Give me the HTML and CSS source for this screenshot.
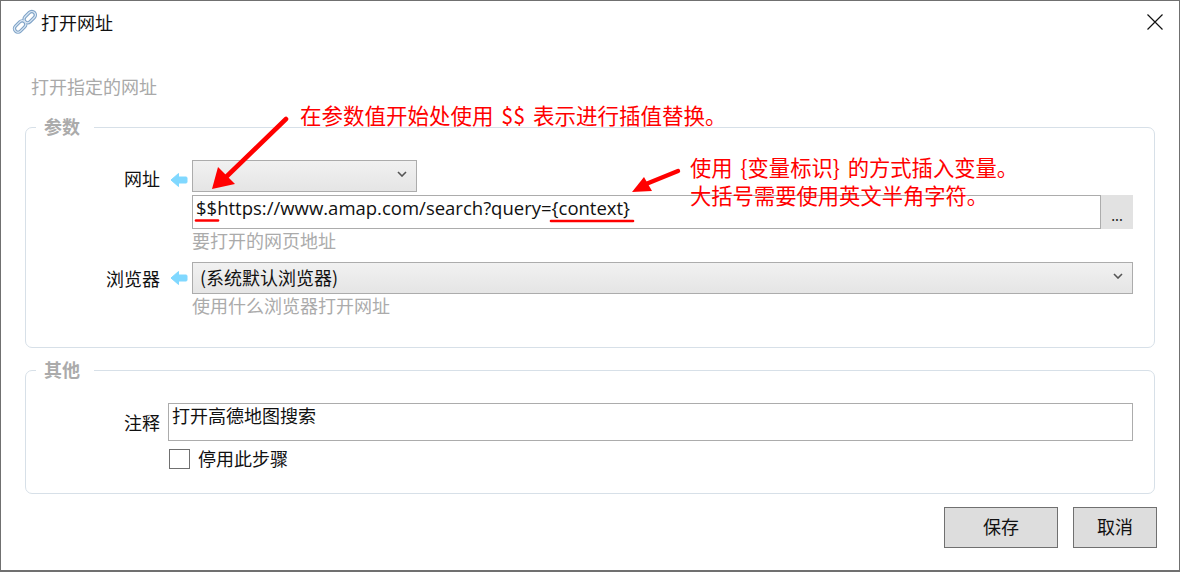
FILE: index.html
```html
<!DOCTYPE html>
<html lang="zh-CN">
<head>
<meta charset="utf-8">
<title>打开网址</title>
<link rel="stylesheet" href="styles.css">
</head>
<body>
<div class="window">
  <header class="titlebar">
    <svg class="app-icon" viewBox="0 0 26 26" width="26" height="26">
      <g fill="none" stroke="#7fa3c7" stroke-width="3.4">
        <rect x="14.2" y="1.6" width="7" height="13" rx="3.5" transform="rotate(45 17.7 8.1)"/>
        <rect x="4.6" y="11" width="7" height="13" rx="3.5" transform="rotate(45 8.1 17.5)"/>
      </g>
      <g fill="none" stroke="#dce8f4" stroke-width="1.2">
        <rect x="14.2" y="1.6" width="7" height="13" rx="3.5" transform="rotate(45 17.7 8.1)"/>
        <rect x="4.6" y="11" width="7" height="13" rx="3.5" transform="rotate(45 8.1 17.5)"/>
      </g>
    </svg>
    <span class="title">打开网址</span>
    <svg class="close" viewBox="0 0 16 16" width="16" height="16"><path d="M.5.5l15 15M15.5.5l-15 15" stroke="#111" stroke-width="1.2" fill="none"/></svg>
  </header>

  <main class="content">
    <p class="subtitle">打开指定的网址</p>

    <fieldset class="group group-params">
      <legend>参数</legend>
      <div class="row row-url">
        <span class="label">网址</span>
        <svg class="link-arrow" viewBox="0 0 18 16" width="18" height="16"><path d="M1 8L8.5 1.5V5H16a1 1 0 0 1 1 1v4a1 1 0 0 1-1 1H8.5v3.5z" fill="#80d8ff" stroke="#80d8ff" stroke-linejoin="round"/></svg>
        <div class="stack">
          <div class="select select-short">
            <svg class="chevron" viewBox="0 0 10 6" width="10" height="6"><path d="M1 1l4 4 4-4" stroke="#555" stroke-width="1.6" fill="none"/></svg>
          </div>
          <div class="input-group">
            <div class="input">$$https://www.amap.com/search?query={context}</div>
            <div class="more">...</div>
          </div>
          <div class="hint">要打开的网页地址</div>
        </div>
      </div>
      <div class="row row-browser">
        <span class="label">浏览器</span>
        <svg class="link-arrow" viewBox="0 0 18 16" width="18" height="16"><path d="M1 8L8.5 1.5V5H16a1 1 0 0 1 1 1v4a1 1 0 0 1-1 1H8.5v3.5z" fill="#80d8ff" stroke="#80d8ff" stroke-linejoin="round"/></svg>
        <div class="stack">
          <div class="select"><span>(系统默认浏览器)</span>
            <svg class="chevron" viewBox="0 0 10 6" width="10" height="6"><path d="M1 1l4 4 4-4" stroke="#555" stroke-width="1.6" fill="none"/></svg>
          </div>
          <div class="hint">使用什么浏览器打开网址</div>
        </div>
      </div>
    </fieldset>

    <fieldset class="group group-other">
      <legend>其他</legend>
      <div class="row row-note">
        <span class="label">注释</span>
        <div class="stack">
          <div class="textarea">打开高德地图搜索</div>
          <div class="check"><span class="box"></span><span class="check-text">停用此步骤</span></div>
        </div>
      </div>
    </fieldset>

    <footer class="actions">
      <div class="btn btn-save">保存</div>
      <div class="btn btn-cancel">取消</div>
    </footer>
  </main>

  <svg class="marks" width="1180" height="572" viewBox="0 0 1180 572">
    <g fill="#f00">
      <path d="M212 189L218 167L235 184Z"/>
      <path d="M632 192L644 177L652 191Z"/>
    </g>
    <g stroke="#f00" fill="none" stroke-linecap="round">
      <path d="M224 179L286 119" stroke-width="4.600"/>
      <path d="M646 184L678 171" stroke-width="4.400"/>
      <path d="M196 220.500H218" stroke-width="2.600"/>
      <path d="M551 221H633" stroke-width="2.600"/>
    </g>
  </svg>
  <div class="note note-one">在参数值开始处使用 $$ 表示进行插值替换。</div>
  <div class="note note-two">使用 {变量标识} 的方式插入变量。<br>大括号需要使用英文半角字符。</div>
</div>
</body>
</html>
```
FILE: styles.css
```css
* { box-sizing: border-box; }
html, body { margin: 0; padding: 0; }
body {
  width: 1180px;
  height: 572px;
  overflow: hidden;
  background: #fff;
  font-family: "Noto Sans", "Noto Sans CJK SC", sans-serif;
  font-size: 18px;
  color: #111;
}
.window {
  position: relative;
  width: 1180px;
  height: 572px;
  border: 1px solid #707070;
  border-bottom-width: 2px;
  background: #fff;
  overflow: hidden;
}
.titlebar {
  display: flex;
  align-items: center;
  height: 42px;
  padding-left: 11px;
  padding-right: 16px;
}
.app-icon { flex: none; margin-right: 3px; }
.title { flex: 1; font-size: 18px; line-height: 24px; font-family: "Noto Sans CJK SC", sans-serif; }
.close { flex: none; }

.content { padding: 0 22px 0 24px; }
.subtitle {
  margin: 30px 0 0 6px;
  height: 26px;
  line-height: 26px;
  color: #a9a9a9;
  font-family: "Noto Sans CJK SC", sans-serif;
}
.group {
  display: block;
  margin: 0;
  padding: 0;
  width: 1130px;
  border: 1.5px solid #d7e0e8;
  border-radius: 7px;
  font-family: "Noto Sans CJK SC", sans-serif;
}
.group legend {
  margin-left: 10px;
  padding: 0 14px 0 8px;
  height: 24px;
  line-height: 22px;
  font-weight: 700;
  color: #ababab;
}
.group-params { height: 233px; margin-top: 16px; }
.group-other { height: 136px; margin-top: 10px; }

.row { display: flex; align-items: flex-start; }
.label { width: 134px; flex: none; text-align: right; line-height: 24px; }
.link-arrow { flex: none; margin: 5px 4px 0 10px; }
.stack { flex: none; width: 941px; display: flex; flex-direction: column; }
.row-url { margin-top: 21px; height: 102px; padding-top: 6px; }
.row-url .label { margin-top: 0; }
.row-url .link-arrow { margin-top: 6px; }
.row-browser { height: 62px; padding-top: 0; margin-top: 0; }
.row-browser .label { margin-top: 4px; }
.row-browser .link-arrow { margin-top: 8px; }

.select {
  position: relative;
  height: 32px;
  border: 1.5px solid #acacac;
  background: linear-gradient(#f1f1f1, #e5e5e5);
  line-height: 29px;
  padding-left: 7px;
  font-family: "Noto Sans CJK SC", sans-serif;
}
.select-short { width: 225px; margin-top: -6px; }
.chevron { position: absolute; right: 9px; top: 10px; }

.input-group { display: flex; margin-top: 3px; height: 34px; }
.input {
  flex: 1;
  border: 1.5px solid #acacac;
  padding-left: 3px;
  line-height: 24px;
  font-family: "Open Sans", "Noto Sans", sans-serif;
  font-size: 18.5px;
  white-space: nowrap;
  background: #fff;
}
.more {
  width: 32px;
  flex: none;
  background: #e2e2e2;
  text-align: center;
  line-height: 40px;
  font-size: 14px;
  color: #222;
}
.hint {
  height: 22px;
  line-height: 24px;
  margin-top: -1px;
  color: #ababab;
  font-family: "Noto Sans CJK SC", sans-serif;
}
.row-note { margin-top: 21px; }
.row-note .label { width: 134px; margin-top: 7px; }
.row-note .stack { width: 965px; margin-left: 8px; }
.textarea {
  height: 38px;
  border: 1.5px solid #acacac;
  padding-left: 3px;
  line-height: 22px;
  white-space: nowrap;
}
.check { display: flex; align-items: center; margin-top: 8px; height: 20px; }
.check-text { padding-bottom: 2px; }
.box {
  width: 21px;
  height: 20px;
  margin: 0 8px 0 1px;
  border: 1.5px solid #707070;
  background: #fff;
}
.actions { display: flex; justify-content: flex-end; gap: 15px; margin-top: 13px; margin-right: 0; }
.btn {
  height: 41px;
  border: 1.5px solid #707070;
  background: #dddddd;
  text-align: center;
  line-height: 36px;
  font-family: "Noto Sans CJK SC", sans-serif;
}
.btn-save { width: 114px; }
.btn-cancel { width: 84px; }

.marks { position: absolute; left: -1px; top: -1px; pointer-events: none; }
.note {
  position: absolute;
  color: #f00;
  line-height: 28px;
  font-family: "Noto Sans CJK SC", sans-serif;
  white-space: nowrap;
  word-spacing: 3px;
}
.note-one { left: 299px; top: 100px; font-size: 21.5px; }
.note-two { left: 689px; top: 152px; font-size: 21.3px; }
```
